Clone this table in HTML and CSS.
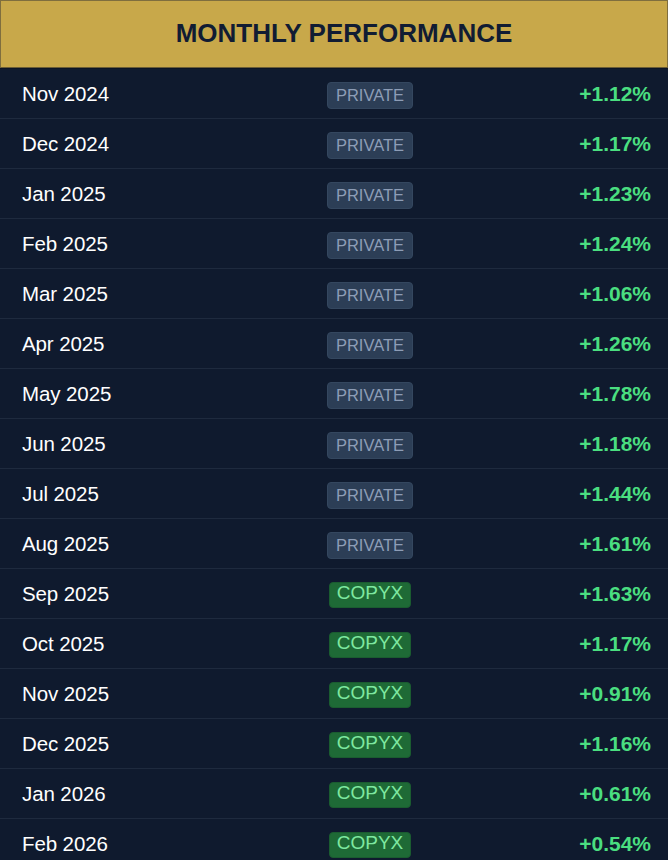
FILE: index.html
```html
<!DOCTYPE html>
<html lang="en">
<head>
<meta charset="utf-8">
<title>Monthly Performance</title>
<link rel="stylesheet" href="styles.css">
</head>
<body>
<div class="card">
  <div class="card-header"><h1 class="title">MONTHLY PERFORMANCE</h1></div>
  <div class="rows">
    <div class="row"><span class="month">Nov 2024</span><span class="cell-badge"><span class="badge badge-private">PRIVATE</span></span><span class="pct">+1.12%</span></div>
    <div class="row"><span class="month">Dec 2024</span><span class="cell-badge"><span class="badge badge-private">PRIVATE</span></span><span class="pct">+1.17%</span></div>
    <div class="row"><span class="month">Jan 2025</span><span class="cell-badge"><span class="badge badge-private">PRIVATE</span></span><span class="pct">+1.23%</span></div>
    <div class="row"><span class="month">Feb 2025</span><span class="cell-badge"><span class="badge badge-private">PRIVATE</span></span><span class="pct">+1.24%</span></div>
    <div class="row"><span class="month">Mar 2025</span><span class="cell-badge"><span class="badge badge-private">PRIVATE</span></span><span class="pct">+1.06%</span></div>
    <div class="row"><span class="month">Apr 2025</span><span class="cell-badge"><span class="badge badge-private">PRIVATE</span></span><span class="pct">+1.26%</span></div>
    <div class="row"><span class="month">May 2025</span><span class="cell-badge"><span class="badge badge-private">PRIVATE</span></span><span class="pct">+1.78%</span></div>
    <div class="row"><span class="month">Jun 2025</span><span class="cell-badge"><span class="badge badge-private">PRIVATE</span></span><span class="pct">+1.18%</span></div>
    <div class="row"><span class="month">Jul 2025</span><span class="cell-badge"><span class="badge badge-private">PRIVATE</span></span><span class="pct">+1.44%</span></div>
    <div class="row"><span class="month">Aug 2025</span><span class="cell-badge"><span class="badge badge-private">PRIVATE</span></span><span class="pct">+1.61%</span></div>
    <div class="row"><span class="month">Sep 2025</span><span class="cell-badge"><span class="badge badge-copyx">COPYX</span></span><span class="pct">+1.63%</span></div>
    <div class="row"><span class="month">Oct 2025</span><span class="cell-badge"><span class="badge badge-copyx">COPYX</span></span><span class="pct">+1.17%</span></div>
    <div class="row"><span class="month">Nov 2025</span><span class="cell-badge"><span class="badge badge-copyx">COPYX</span></span><span class="pct">+0.91%</span></div>
    <div class="row"><span class="month">Dec 2025</span><span class="cell-badge"><span class="badge badge-copyx">COPYX</span></span><span class="pct">+1.16%</span></div>
    <div class="row"><span class="month">Jan 2026</span><span class="cell-badge"><span class="badge badge-copyx">COPYX</span></span><span class="pct">+0.61%</span></div>
    <div class="row"><span class="month">Feb 2026</span><span class="cell-badge"><span class="badge badge-copyx">COPYX</span></span><span class="pct">+0.54%</span></div>
  </div>
</div>
</body>
</html>
```
FILE: styles.css
```css
html, body {
  margin: 0;
  padding: 0;
  background: #0f1a2e;
}
body {
  font-family: "Liberation Sans", Arial, sans-serif;
  overflow: hidden;
}
.card {
  width: 668px;
  background: #0f1a2e;
}
.card-header {
  height: 68px;
  box-sizing: border-box;
  background: #c8a84a;
  border: 1px solid #7f6e3e;
  border-bottom: 1px solid #6b5d36;
  display: flex;
  align-items: center;
  justify-content: center;
  padding: 0 0 2px 20px;
}
.title {
  margin: 0;
  font-size: 26px;
  font-weight: 700;
  color: #111c33;
}
.rows {
  display: flex;
  flex-direction: column;
  border-top: 1px solid #0b1424;
}
.row {
  height: 50px;
  box-sizing: border-box;
  border-bottom: 1px solid #1e2a3e;
  display: grid;
  grid-template-columns: 278px 140px 1fr;
  align-items: center;
  padding: 0 17px 0 22px;
}
.month {
  font-size: 20.5px;
  color: #ffffff;
  letter-spacing: -0.1px;
}
.cell-badge {
  display: flex;
  justify-content: center;
  margin-top: 3px;
}
.pct {
  justify-self: end;
  font-size: 21px;
  font-weight: 700;
  color: #4ade80;
}
.badge {
  display: inline-block;
  border-radius: 4px;
  box-sizing: border-box;
}
.badge-private {
  font-size: 16.5px;
  line-height: 19px;
  padding: 3px 8px 3px;
  background: #2c3e56;
  border: 1px solid #34475f;
  color: #8d9db6;
}
.badge-copyx {
  font-size: 19px;
  line-height: 19px;
  height: 26px;
  padding: 0 7px;
  background: #1e6a36;
  border: 1px solid #1a5c30;
  color: #7ee8a0;
}
```
